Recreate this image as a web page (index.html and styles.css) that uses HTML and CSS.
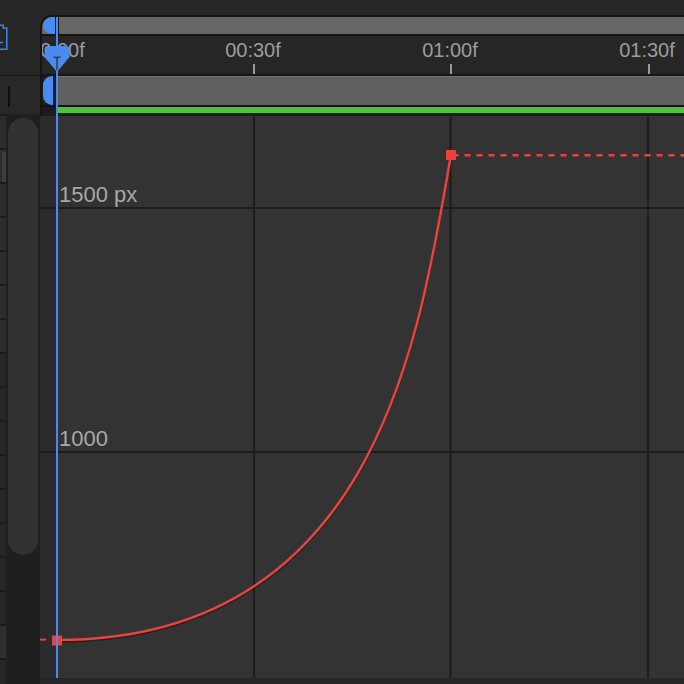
FILE: index.html
```html
<!DOCTYPE html>
<html lang="en">
<head>
<meta charset="utf-8">
<title>Graph Editor</title>
<link rel="stylesheet" href="styles.css">
</head>
<body>
<div class="app">
  <aside class="side">
    <div class="side-top">
      <svg class="side-icon" width="10" height="30" viewBox="0 0 10 30">
        <path d="M0 2.2 H3.2 V5 H6.8 V26.2 H0" fill="none" stroke="#3d86e6" stroke-width="1.5"/>
        <path d="M0 19.5 H3" fill="none" stroke="#3d86e6" stroke-width="1.5"/>
      </svg>
    </div>
    <div class="side-row"><span class="side-bar"></span></div>
    <div class="side-list">
      <div class="rows">
        <div class="row"></div>
        <div class="row"><span class="row-hl"></span></div>
        <div class="row"></div>
        <div class="row"></div>
        <div class="row"></div>
        <div class="row"></div>
        <div class="row"></div>
        <div class="row dark"></div>
        <div class="row dark"></div>
        <div class="row dark"></div>
        <div class="row dark"></div>
        <div class="row dark"></div>
        <div class="row dark"></div>
        <div class="row dark"></div>
        <div class="row dark"></div>
        <div class="row light"></div>
        <div class="row dark"></div>
      </div>
      <div class="track"><div class="thumb"></div></div>
    </div>
  </aside>

  <main class="timeline">
    <div class="tl-top"></div>
    <div class="head">
      <div class="nav">
        <span class="cap"></span>
        <span class="nav-mark"></span>
        <span class="nav-fill"></span>
      </div>
      <div class="ruler">
        <span class="tlabel" style="left:15px">00:00f</span>
        <span class="tlabel" style="left:211px">00:30f</span>
        <span class="tlabel" style="left:408px">01:00f</span>
        <span class="tlabel" style="left:605px">01:30f</span>
        <span class="tick" style="left:211px"></span>
        <span class="tick" style="left:408px"></span>
        <span class="tick" style="left:605.5px"></span>
      </div>
      <div class="work">
        <span class="cap small"></span>
        <span class="work-gap"></span>
        <span class="work-fill"></span>
      </div>
      <div class="range">
        <span class="range-pre"></span>
        <span class="range-fill"></span>
      </div>
    </div>

    <div class="graph">
      <svg class="graph-svg" width="644" height="562" viewBox="0 0 644 562">
        <rect x="0" y="0" width="17" height="562" fill="#2b2b2b"/>
        <rect x="17" y="0" width="627" height="562" fill="#333333"/>
        <g fill="#1d1d1d">
          <rect x="213" y="0" width="2" height="562"/>
          <rect x="409.5" y="0" width="2" height="562"/>
          <rect x="607" y="0" width="2" height="562"/>
          <rect x="0" y="91" width="644" height="2"/>
          <rect x="0" y="335" width="644" height="2"/>
        </g>
        <path transform="translate(0,1.6)" d="M17 524 C340 524 380 214 411 39" fill="none" stroke="rgba(0,0,0,0.35)" stroke-width="2.5"/>
        <path d="M17 524 C340 524 380 214 411 39" fill="none" stroke="#e8433e" stroke-width="2.5"/>
        <path d="M12 523.6 H0" stroke="#e8433e" stroke-width="2" stroke-dasharray="6 6" stroke-dashoffset="6"/>
        <path d="M411 39.2 H644" stroke="#e8433e" stroke-width="2.4" stroke-dasharray="6 6" stroke-dashoffset="-1.5"/>
        <rect x="12" y="519.5" width="10" height="10" fill="#e8433e"/>
        <rect x="406" y="34" width="10" height="10" fill="#e8433e"/>
      </svg>
      <span class="vlabel" style="top:68px">1500 px</span>
      <span class="vlabel" style="top:312px">1000</span>
    </div>
    <div class="tl-bottom"></div>

    <div class="playhead-line"></div>
    <svg class="playhead-head" width="28" height="30" viewBox="0 0 28 30">
      <path d="M1.5 5 Q1.5 2 4.5 2 H23.5 Q26.5 2 26.5 5 V13 L14 28 L1.5 13 Z" fill="#4b8bef"/>
      <rect x="10.5" y="12.5" width="7" height="1.6" fill="#3a3f47"/>
      <rect x="13.2" y="13" width="1.6" height="13" fill="#3a3f47"/>
    </svg>
  </main>
</div>
</body>
</html>
```

FILE: styles.css
```css
* {
  box-sizing: border-box;
}

html, body {
  margin: 0;
  padding: 0;
}

body {
  background: #262626;
  font-family: "Liberation Sans", Arial, sans-serif;
  width: 684px;
  height: 684px;
  overflow: hidden;
}

.app {
  display: flex;
  width: 684px;
  height: 684px;
  overflow: hidden;
}

/* ---------- left side panel ---------- */
.side {
  width: 40px;
  flex: none;
  display: flex;
  flex-direction: column;
  background: #262626;
}

.side-top {
  height: 75px;
  flex: none;
}

.side-icon {
  display: block;
  margin-top: 23px;
}

.side-row {
  height: 39px;
  flex: none;
  border-top: 1px solid #1b1b1b;
  background: #282828;
  padding: 10px 0 0 8px;
}

.side-bar {
  display: block;
  width: 1.5px;
  height: 21px;
  background: #0e0e0e;
}

.side-list {
  flex: 1;
  display: flex;
  min-height: 0;
}

.rows {
  width: 6px;
  flex: none;
  display: flex;
  flex-direction: column;
}

.row {
  height: 34px;
  flex: none;
  border-top: 2px solid #1c1c1c;
  background: #2c2c2c;
  padding: 2px 0 0 2px;
}

.row.dark {
  background: #262626;
}

.row.light {
  background: #2f2f2f;
}

.row-hl {
  display: block;
  width: 4px;
  height: 30px;
  background: #3e3e3e;
}

.track {
  flex: 1;
  background: #1f1f1f;
  padding: 4px 2px 0 2px;
}

.thumb {
  width: 30px;
  height: 437px;
  border-radius: 15px;
  background: #323232;
}

/* ---------- timeline ---------- */
.timeline {
  flex: 1;
  position: relative;
  display: flex;
  flex-direction: column;
  background: #262626;
}

.tl-top {
  height: 15px;
  flex: none;
}

.head {
  flex: none;
  border-top: 2px solid #151515;
  border-left: 2px solid #151515;
  border-top-left-radius: 12px;
  overflow: hidden;
}

.nav {
  height: 19px;
  display: flex;
  border-bottom: 2px solid #151515;
  background: #676767;
}

.cap {
  width: 12px;
  margin-left: 1px;
  flex: none;
  background: #4b8bef;
  border-radius: 9px 0 0 9px;
}

.cap.small {
  width: 10px;
}

.nav-mark {
  width: 4px;
  flex: none;
  background: #151515;
}

.nav-fill {
  flex: 1;
}

.ruler {
  position: relative;
  height: 40px;
  border-bottom: 2px solid #151515;
  background: #262626;
  overflow: hidden;
}

.tlabel {
  position: absolute;
  top: 4px;
  transform: translateX(-50%);
  font-size: 20px;
  line-height: 20px;
  color: #9c9c9c;
  white-space: nowrap;
}

.tick {
  position: absolute;
  bottom: 0;
  width: 2px;
  height: 10px;
  background: #9a9a9a;
}

.work {
  height: 31px;
  display: flex;
  border-bottom: 2px solid #151515;
  background: #1c1c1c;
}

.work-gap {
  width: 5px;
  flex: none;
}

.work-fill {
  flex: 1;
  background: #606060;
  box-shadow: inset 0 1px 0 #737373;
}

.range {
  height: 9px;
  display: flex;
  border-bottom: 3px solid #1c1c1c;
  background: #1c1c1c;
}

.range-pre {
  width: 16px;
  flex: none;
}

.range-fill {
  flex: 1;
  background: #52bf3d;
}

.graph {
  position: relative;
  height: 562px;
  flex: none;
}

.graph-svg {
  display: block;
}

.vlabel {
  position: absolute;
  left: 19px;
  font-size: 22px;
  line-height: 22px;
  color: #a8a8a8;
  white-space: nowrap;
}

.tl-bottom {
  flex: 1;
  background: #272727;
}

/* playhead overlay */
.playhead-line {
  position: absolute;
  left: 16px;
  top: 17px;
  bottom: 6px;
  width: 2px;
  background: #4b8bef;
}

.playhead-head {
  position: absolute;
  left: 3px;
  top: 44px;
  display: block;
}
```
